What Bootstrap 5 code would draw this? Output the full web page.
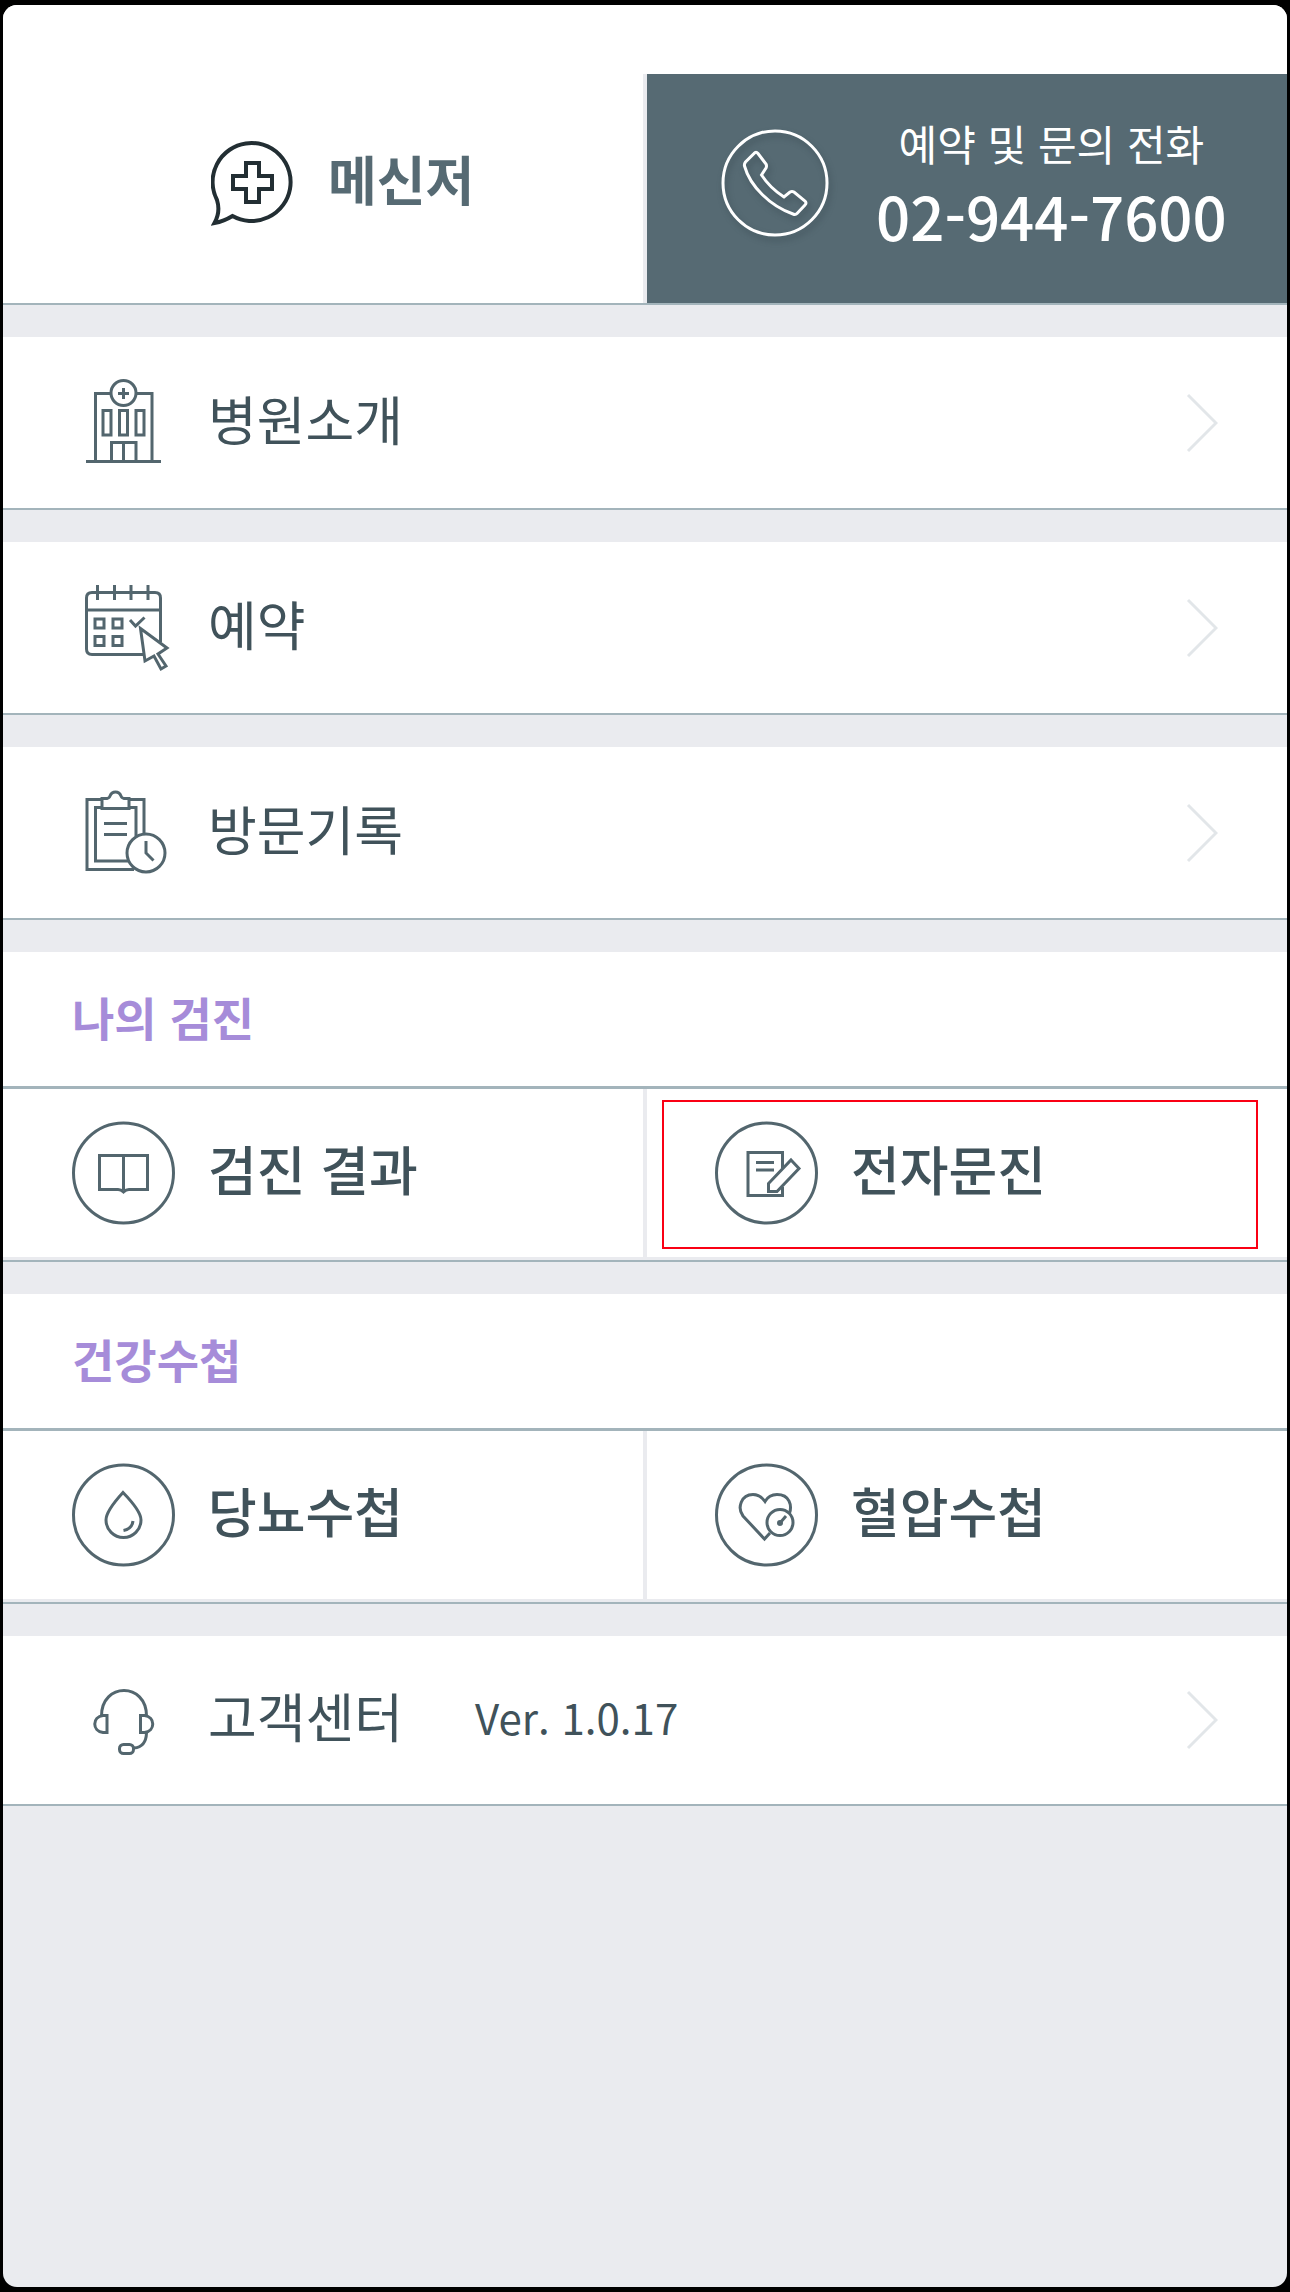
<!DOCTYPE html>
<html lang="ko">
<head>
<meta charset="utf-8">
<meta name="viewport" content="width=device-width, initial-scale=1">
<title>병원 메뉴</title>
<link href="https://cdn.jsdelivr.net/npm/bootstrap@5.3.0/dist/css/bootstrap.min.css" rel="stylesheet">
<style>
  :root { --ink: #40525a; --slate: #566a73; --rule: #a3b4bb; --ground: #eaebef; --violet: #a68cd9; }
  body { background: #000; padding: 5px 3px; font-family: "Noto Sans CJK KR", sans-serif; color: var(--ink); }
  a { color: inherit; text-decoration: none; }
  svg { fill: none; stroke: #53666e; stroke-width: 3; flex: none; }
  .screen { min-height: calc(100vh - 10px); background: var(--ground); border-radius: 14px; gap: 32px; }
  .panel { background: #fff; border-bottom: 2px solid var(--rule); }
  .topbar { padding-top: 69px; }
  .tile { height: 229px; padding-bottom: 12px; }
  .tile-chat { flex: 0 0 calc(50% + 2px); padding-left: 208px; gap: 33px; color: var(--slate); font-size: 53px; font-weight: 700; border-right: 4px solid var(--ground); }
  .tile-chat span { margin-bottom: 8px; }
  .tile-call { flex: 1 1 0; padding-left: 73px; gap: 46px; background: var(--slate); color: #fff; white-space: nowrap; }
  .call-label { font-size: 42px; line-height: 64px; }
  .call-number { font-size: 60px; line-height: 80px; font-weight: 500; }
  .entry { height: 171px; padding: 0 69px; gap: 32px; font-size: 53px; }
  .entry-label { margin-bottom: 8px; }
  .entry-short { height: 168px; }
  .version { font-size: 42px; margin-left: 40px; margin-bottom: 8px; }
  .group-title { height: 137px; padding: 0 69px 4px; margin: 0; font-size: 46px; font-weight: 700; color: var(--violet); border-bottom: 3px solid var(--rule); }
  .pair { border-bottom: 3px solid var(--ground); }
  .pair .entry { height: 168px; flex: 1 1 0; font-weight: 500; padding-right: 0; }
  .pair .entry:first-child { flex: 0 0 calc(50% + 2px); border-right: 4px solid var(--ground); }
  .pair .entry:last-child { padding-left: 68px; }
  .marked::after { content: ""; position: absolute; inset: 11px 29px 8px 15px; border: 2px solid #fa0014; }
  .chevron { stroke: #e2e6e9; }
  .chat-icon { stroke: #222e33; stroke-width: 4; }
  .call-icon { stroke: #fff; filter: drop-shadow(2px 4px 3px rgba(40, 55, 62, .4)); }
</style>
<script src="https://cdn.jsdelivr.net/npm/bootstrap@5.3.0/dist/js/bootstrap.bundle.min.js"></script>
</head>
<body>
<main class="screen d-flex flex-column overflow-hidden">

  <header class="panel topbar d-flex">
    <a href="#" class="tile tile-chat d-flex align-items-center">
      <svg class="chat-icon" width="84" height="88" viewBox="210 138 84 88" aria-hidden="true">
        <path d="M231.500 215C225 219 219 221 213.500 222C218 214 218.500 207 216 199A39 39 0 1 1 231.500 215Z"/>
        <path d="M245 162H258V175H271V188H258V201H245V188H232V175H245Z"/>
      </svg>
      <span>메신저</span>
    </a>
    <a href="tel:02-944-7600" class="tile tile-call d-flex align-items-center">
      <svg class="call-icon" width="110" height="110" viewBox="720 128 110 110" aria-hidden="true">
        <circle cx="775" cy="183" r="52"/>
        <path d="M754 153.500Q756 151 758 153.500L766 164Q767 166 766 168L761.500 175Q770 188 784 197L790 192Q792 191 794 192L805 201Q807 203 805 205L797 213.500Q795.500 215 793 214C770 206 750 186 744.500 166Q744 164 745.500 162Z"/>
      </svg>
      <span class="d-flex flex-column text-center">
        <span class="call-label">예약 및 문의 전화</span>
        <span class="call-number">02-944-7600</span>
      </span>
    </a>
  </header>

  <a href="#" class="panel">
    <span class="entry d-flex align-items-center">
      <svg width="104" height="104" viewBox="72 371 104 104" aria-hidden="true">
        <path d="M95.500 461V393.500H111M136 393.500H152V461M86 461.500H161M111.500 461V442.500H136V461M123.500 443V461M118 393.500H129M123.500 388V399"/>
        <circle cx="123.500" cy="393" r="12.500"/>
        <path d="M103 410.500H111V435H103ZM119.500 410.500H127.500V435H119.500ZM136 410.500H144V435H136Z"/>
      </svg>
      <span class="entry-label">병원소개</span>
      <svg class="chevron ms-auto" width="32" height="60" viewBox="0 0 32 60" aria-hidden="true"><path d="M2 2L30 30L2 58"/></svg>
    </span>
  </a>

  <a href="#" class="panel">
    <span class="entry d-flex align-items-center">
      <svg width="104" height="104" viewBox="72 576 104 104" aria-hidden="true">
        <path d="M160.500 642V598Q160.500 592.500 155 592.500H92Q86.500 592.500 86.500 598V649Q86.500 654.500 92 654.500H144M87 610H160M97.500 585V600M114.500 585V600M131 585V600M148 585V600"/>
        <path d="M95 619H104V628H95ZM113 619H122V628H113ZM95 636.500H104V645.500H95ZM113 636.500H122V645.500H113ZM130 620L135.500 626L144.500 617.500"/>
        <path d="M140.500 628.500L167 648L158 654L166 666L161 669L154 656L145 661Z"/>
      </svg>
      <span class="entry-label">예약</span>
      <svg class="chevron ms-auto" width="32" height="60" viewBox="0 0 32 60" aria-hidden="true"><path d="M2 2L30 30L2 58"/></svg>
    </span>
  </a>

  <a href="#" class="panel">
    <span class="entry d-flex align-items-center">
      <svg width="104" height="104" viewBox="72 781 104 104" aria-hidden="true">
        <path d="M102 799.500H87V869.500H134M129 799.500H144V833M102 807.500H95.500V861H128M129 807.500H136V836M104 823.500H127M104 834.500H127"/>
        <path d="M102 808.500V798.500H107Q109.500 798 110 796Q111.500 792 115.500 792Q119.500 792 121 796Q121.500 798 124 798.500H129V808.500Z"/>
        <circle cx="146" cy="853" r="19"/>
        <path d="M146 841V853L153.500 860.500"/>
      </svg>
      <span class="entry-label">방문기록</span>
      <svg class="chevron ms-auto" width="32" height="60" viewBox="0 0 32 60" aria-hidden="true"><path d="M2 2L30 30L2 58"/></svg>
    </span>
  </a>

  <section class="panel">
    <h2 class="group-title d-flex align-items-center">나의 검진</h2>
    <div class="pair d-flex">
      <a href="#" class="entry d-flex align-items-center">
        <svg width="104" height="104" viewBox="72 1121 104 104" aria-hidden="true">
          <circle cx="123.500" cy="1173" r="50"/>
          <path d="M99.500 1155.500H147.500V1189.500H129Q126 1189.500 123.500 1192Q121 1189.500 118 1189.500H99.500ZM123.500 1156V1190"/>
        </svg>
        <span class="entry-label">검진 결과</span>
      </a>
      <a href="#" class="entry marked position-relative d-flex align-items-center">
        <svg width="104" height="104" viewBox="715 1121 104 104" aria-hidden="true">
          <circle cx="766.500" cy="1173" r="50"/>
          <path d="M782.500 1168V1152.500H748V1195.500H782.500V1187M756 1162.500H774M756 1170H774"/>
          <path d="M791 1160L799 1168.500L777 1191.500H768.500V1183.500Z"/>
        </svg>
        <span class="entry-label">전자문진</span>
      </a>
    </div>
  </section>

  <section class="panel">
    <h2 class="group-title d-flex align-items-center">건강수첩</h2>
    <div class="pair d-flex">
      <a href="#" class="entry d-flex align-items-center">
        <svg width="104" height="104" viewBox="72 1464 104 104" aria-hidden="true">
          <circle cx="123.500" cy="1516" r="50"/>
          <path d="M123 1493.500Q106 1512 106 1521A17.500 17.500 0 0 0 141 1521Q141 1512 123 1493.500ZM133 1522Q132 1530 123.500 1531.500"/>
        </svg>
        <span class="entry-label">당뇨수첩</span>
      </a>
      <a href="#" class="entry d-flex align-items-center">
        <svg width="104" height="104" viewBox="715 1464 104 104" aria-hidden="true">
          <circle cx="766.500" cy="1516" r="50"/>
          <path d="M789.500 1514C792 1507 790 1495.500 777 1495.500Q769 1495.500 765 1502.500Q760 1495.500 753 1495.500C741 1495.500 737 1509 743 1517L764.500 1540L770 1534"/>
          <circle cx="780" cy="1523.500" r="13"/>
          <circle cx="780" cy="1524" r="1.500"/>
          <path d="M780 1524L786 1517"/>
        </svg>
        <span class="entry-label">혈압수첩</span>
      </a>
    </div>
  </section>

  <a href="#" class="panel">
    <span class="entry entry-short d-flex align-items-center">
      <svg width="104" height="104" viewBox="72 1669 104 104" aria-hidden="true">
        <path d="M101.500 1717C101.500 1683 146.500 1683 146.500 1717M146.500 1734Q146 1748 134 1749"/>
        <path d="M107 1716.500V1733.500H103C92 1732 92 1718 103 1716.500ZM140.500 1716.500V1733.500H144.500C155.500 1732 155.500 1718 144.500 1716.500Z"/>
        <rect x="119.500" y="1745.500" width="14" height="9" rx="4"/>
      </svg>
      <span class="entry-label">고객센터</span>
      <span class="version">Ver. 1.0.17</span>
      <svg class="chevron ms-auto" width="32" height="60" viewBox="0 0 32 60" aria-hidden="true"><path d="M2 2L30 30L2 58"/></svg>
    </span>
  </a>

</main>
</body>
</html>
